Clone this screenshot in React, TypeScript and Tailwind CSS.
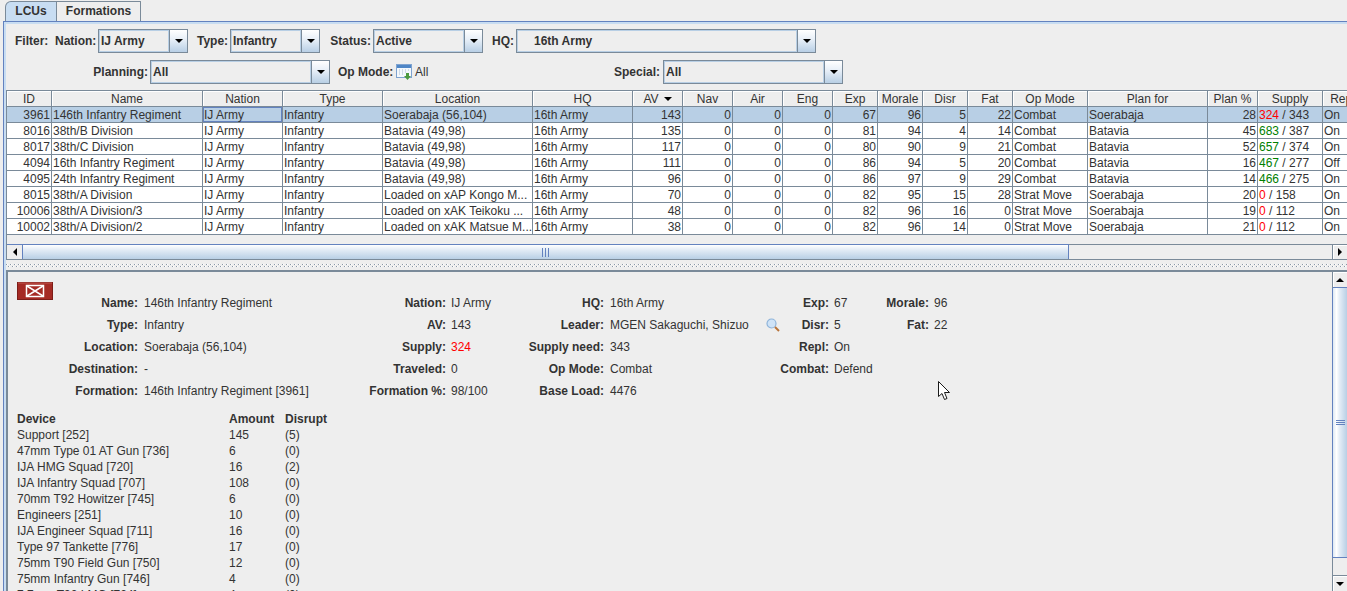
import React from "react";

const cols = [45, 151, 80, 100, 150, 100, 50, 50, 50, 50, 45, 45, 45, 45, 75, 120, 50, 65, 40];
const heads = ["ID", "Name", "Nation", "Type", "Location", "HQ", "AV", "Nav", "Air", "Eng", "Exp", "Morale", "Disr", "Fat", "Op Mode", "Plan for", "Plan %", "Supply", "Repl"];

type Row = { id: string; name: string; loc: string; av: string; exp: string; mor: string; dis: string; fat: string; mode: string; plan: string; pct: string; sup: string; supc: string; need: string; rep: string };
const rows: Row[] = [
  { id: "3961", name: "146th Infantry Regiment", loc: "Soerabaja (56,104)", av: "143", exp: "67", mor: "96", dis: "5", fat: "22", mode: "Combat", plan: "Soerabaja", pct: "28", sup: "324", supc: "text-[#ff0000]", need: "343", rep: "On" },
  { id: "8016", name: "38th/B Division", loc: "Batavia (49,98)", av: "135", exp: "81", mor: "94", dis: "4", fat: "14", mode: "Combat", plan: "Batavia", pct: "45", sup: "683", supc: "text-[#008000]", need: "387", rep: "On" },
  { id: "8017", name: "38th/C Division", loc: "Batavia (49,98)", av: "117", exp: "80", mor: "90", dis: "9", fat: "21", mode: "Combat", plan: "Batavia", pct: "52", sup: "657", supc: "text-[#008000]", need: "374", rep: "On" },
  { id: "4094", name: "16th Infantry Regiment", loc: "Batavia (49,98)", av: "111", exp: "86", mor: "94", dis: "5", fat: "20", mode: "Combat", plan: "Batavia", pct: "16", sup: "467", supc: "text-[#008000]", need: "277", rep: "Off" },
  { id: "4095", name: "24th Infantry Regiment", loc: "Batavia (49,98)", av: "96", exp: "86", mor: "97", dis: "9", fat: "29", mode: "Combat", plan: "Batavia", pct: "14", sup: "466", supc: "text-[#008000]", need: "275", rep: "On" },
  { id: "8015", name: "38th/A Division", loc: "Loaded on xAP Kongo M...", av: "70", exp: "82", mor: "95", dis: "15", fat: "28", mode: "Strat Move", plan: "Soerabaja", pct: "20", sup: "0", supc: "text-[#ff0000]", need: "158", rep: "On" },
  { id: "10006", name: "38th/A Division/3", loc: "Loaded on xAK Teikoku ...", av: "48", exp: "82", mor: "96", dis: "16", fat: "0", mode: "Strat Move", plan: "Soerabaja", pct: "19", sup: "0", supc: "text-[#ff0000]", need: "112", rep: "On" },
  { id: "10002", name: "38th/A Division/2", loc: "Loaded on xAK Matsue M...", av: "38", exp: "82", mor: "96", dis: "14", fat: "0", mode: "Strat Move", plan: "Soerabaja", pct: "21", sup: "0", supc: "text-[#ff0000]", need: "112", rep: "On" },
];

const devices = [
  ["Support [252]", "145", "(5)"],
  ["47mm Type 01 AT Gun [736]", "6", "(0)"],
  ["IJA HMG Squad [720]", "16", "(2)"],
  ["IJA Infantry Squad [707]", "108", "(0)"],
  ["70mm T92 Howitzer [745]", "6", "(0)"],
  ["Engineers [251]", "10", "(0)"],
  ["IJA Engineer Squad [711]", "16", "(0)"],
  ["Type 97 Tankette [776]", "17", "(0)"],
  ["75mm T90 Field Gun [750]", "12", "(0)"],
  ["75mm Infantry Gun [746]", "4", "(0)"],
  ["7.7mm T92 LMG [724]", "4", "(0)"],
];

function Arrow() {
  return <div className="w-0 h-0 border-l-[4px] border-r-[4px] border-t-[4px] border-l-transparent border-r-transparent border-t-black" />;
}

function Combo({ text, width, indent }: { text: string; width: string; indent?: boolean }) {
  return (
    <div className={`flex h-[24px] border border-[#7a8a99] ${width}`}>
      <div className={`flex-1 min-w-0 flex items-center font-bold border border-[#b8cfe5] ${indent ? "pl-[16px]" : "pl-[1px]"}`}>{text}</div>
      <div className="w-[18px] border-l border-[#7a8a99] flex items-center justify-center bg-[linear-gradient(to_bottom,#ffffff,#e6eef7_45%,#b8cfe5)]">
        <Arrow />
      </div>
    </div>
  );
}

function Cell({ children, right, cls }: { children: React.ReactNode; right?: boolean; cls?: string }) {
  return (
    <td className={`h-[16px] p-0 pt-[1px] border-r border-b border-[#7a8a99] overflow-hidden whitespace-nowrap leading-[14px] ${right ? "text-right pr-[1px]" : "pl-[1px]"} ${cls ?? ""}`}>
      {children}
    </td>
  );
}

function Label({ children }: { children?: React.ReactNode }) {
  return <div className="font-bold text-right whitespace-nowrap">{children}</div>;
}

function DLabel({ children }: { children?: React.ReactNode }) {
  return <div className="font-bold text-right whitespace-nowrap -mr-[1px]">{children}</div>;
}

function Info({ children, pad }: { children?: React.ReactNode; pad: string }) {
  return <div className={`whitespace-nowrap flex items-center ${pad}`}>{children}</div>;
}

export default function App() {
  return (
    <div className="relative w-[1347px] h-[591px] overflow-hidden bg-[#eeeeee] text-[12px] text-[#333333] font-['Liberation_Sans',Arial,sans-serif] flex flex-col">
      {/* tabs */}
      <div className="flex h-[21px] pl-[5px] pt-[1px] shrink-0">
        <div className="w-[52px] border border-b-0 border-[#7a8a99] rounded-tl-[6px] bg-[#c8ddf2] font-bold flex items-center justify-center pb-[1px] text-center">LCUs</div>
        <div className="w-[84px] border border-l-0 border-b-0 border-[#7a8a99] rounded-tr-[1px] bg-[#eeeeee] font-bold flex items-center justify-center pb-[1px]">Formations</div>
      </div>

      {/* tab pane */}
      <div className="flex-1 min-h-0 ml-[3px] border-l border-t border-[#6382bf] flex flex-col">
        <div className="flex-1 min-h-0 border-l-2 border-t-2 border-[#c8ddf2] flex flex-col">
          {/* filter */}
          <div className="flex items-center h-[24px] mt-[5px] shrink-0">
            <div className="font-bold ml-[9px] w-[33px] whitespace-nowrap">Filter:</div>
            <div className="ml-[7px] w-[41px]"><Label>Nation:</Label></div>
            <div className="ml-[2px]"><Combo text="IJ Army" width="w-[90px]" /></div>
            <div className="ml-[9px] w-[31px]"><Label>Type:</Label></div>
            <div className="ml-[2px]"><Combo text="Infantry" width="w-[90px]" /></div>
            <div className="ml-[10px] w-[41px]"><Label>Status:</Label></div>
            <div className="ml-[2px]"><Combo text="Active" width="w-[110px]" /></div>
            <div className="ml-[9px] w-[22px]"><Label>HQ:</Label></div>
            <div className="ml-[2px]"><Combo text="16th Army" width="w-[300px]" indent /></div>
          </div>
          <div className="flex items-center h-[24px] mt-[7px] shrink-0">
            <div className="ml-[87px] w-[55px]"><Label>Planning:</Label></div>
            <div className="ml-[2px]"><Combo text="All" width="w-[180px]" /></div>
            <div className="ml-[8px] w-[54px]"><Label>Op Mode:</Label></div>
            <svg className="ml-[4px] shrink-0" width="16" height="16" viewBox="0 0 16 16">
              <rect x="0.5" y="0.5" width="15" height="13" fill="#f4f8fc" stroke="#7fa3d0" />
              <rect x="1" y="1" width="14" height="3" fill="#4f86c6" />
              <path d="M3 6h1M6 6h1M9 6h1M12 6h1M3 8h1M6 8h1M9 8h1M3 10h1M6 10h1" stroke="#a9bdd4" />
              <path d="M10 9h3v3h2l-3.500 4-3.500-4h2z" fill="#4c9a3f" />
            </svg>
            <div className="ml-[3px] w-[201px]">All</div>
            <div className="w-[44px] flex justify-end"><Label>Special:</Label></div>
            <div className="ml-[3px]"><Combo text="All" width="w-[180px]" /></div>
          </div>

          {/* table scroll pane */}
          <div className="mt-[6px] h-[170px] shrink-0 border-l border-t border-[#7a8a99] flex flex-col overflow-hidden">
            <div className="h-[144px] shrink-0 overflow-hidden">
              <table className="table-fixed border-separate border-spacing-0 w-[1356px]">
                <colgroup>
                  {cols.map((w, i) => <col key={i} style={{ width: w }} />)}
                </colgroup>
                <thead>
                  <tr>
                    {heads.map((h) => (
                      <th key={h} className="h-[16px] p-0 pt-[1px] font-normal text-center leading-[14px] bg-[#eeeeee] border-r border-b border-[#7a8a99] shadow-[inset_1px_1px_0_#ffffff] whitespace-nowrap overflow-hidden">
                        {h === "AV" ? (
                          <div className="flex items-center justify-center gap-[5px] h-[14px]">AV<Arrow /></div>
                        ) : h}
                      </th>
                    ))}
                  </tr>
                </thead>
                <tbody>
                  {rows.map((r, i) => (
                    <tr key={r.id} className={i === 0 ? "bg-[#b8cfe5]" : "bg-white"}>
                      <Cell right>{r.id}</Cell>
                      <Cell>{r.name}</Cell>
                      <Cell cls={i === 0 ? "shadow-[inset_0_0_0_1px_#6382bf]" : ""}>IJ Army</Cell>
                      <Cell>Infantry</Cell>
                      <Cell>{r.loc}</Cell>
                      <Cell>16th Army</Cell>
                      <Cell right>{r.av}</Cell>
                      <Cell right>0</Cell>
                      <Cell right>0</Cell>
                      <Cell right>0</Cell>
                      <Cell right>{r.exp}</Cell>
                      <Cell right>{r.mor}</Cell>
                      <Cell right>{r.dis}</Cell>
                      <Cell right>{r.fat}</Cell>
                      <Cell>{r.mode}</Cell>
                      <Cell>{r.plan}</Cell>
                      <Cell right>{r.pct}</Cell>
                      <Cell><span className={r.supc}>{r.sup}</span> / {r.need}</Cell>
                      <Cell>{r.rep}</Cell>
                    </tr>
                  ))}
                </tbody>
              </table>
            </div>
            <div className="h-[9px] shrink-0" />
            {/* horizontal scrollbar */}
            <div className="h-[16px] shrink-0 flex border-b border-[#7a8a99]">
              <div className="w-[16px] border-t border-r border-[#6382bf] flex items-center justify-center">
                <div className="w-0 h-0 border-y-[4px] border-r-[4px] border-y-transparent border-r-black" />
              </div>
              <div className="w-[1046px] border-t border-r border-[#6382bf] flex items-center justify-center bg-[linear-gradient(to_bottom,#ffffff,#e6eef7_30%,#b8cfe5)]">
                <div className="flex gap-[2px] h-[9px]">
                  <div className="w-[1px] bg-[#6382bf]" /><div className="w-[1px] bg-[#6382bf]" /><div className="w-[1px] bg-[#6382bf]" />
                </div>
              </div>
              <div className="w-[263px] border-t border-[#7a8a99]" />
              <div className="w-[15px] border-t border-l border-[#7a8a99] shadow-[inset_1px_1px_0_#ffffff] flex items-center justify-center">
                <div className="w-0 h-0 border-y-[4px] border-l-[4px] border-y-transparent border-l-black" />
              </div>
            </div>
          </div>

          {/* split divider */}
          <div className="h-[10px] shrink-0 flex flex-col justify-center gap-[1px]">
            <div className="h-[1px] bg-[repeating-linear-gradient(to_right,#8a98a8_0,#8a98a8_1px,#ffffff_1px,#ffffff_2px,#eeeeee_2px,#eeeeee_4px)]" />
            <div className="h-[1px] ml-[2px] bg-[repeating-linear-gradient(to_right,#8a98a8_0,#8a98a8_1px,#ffffff_1px,#ffffff_2px,#eeeeee_2px,#eeeeee_4px)]" />
          </div>

          {/* lower panel */}
          <div className="flex-1 min-h-0 flex border-t-2 border-l-2 border-[#7a8a99] overflow-hidden">
            <div className="flex-1 min-w-0 pl-[9px] pt-[10px] overflow-hidden">
              <svg width="36" height="18" viewBox="0 0 36 18" className="block -mb-[8px]">
                <rect x="0" y="0" width="36" height="18" fill="#a52b25" />
                <rect x="0.5" y="0.5" width="35" height="17" fill="none" stroke="#7d1d18" />
                <path d="M1 1h34" stroke="#c45a52" />
                <rect x="9.500" y="3.500" width="17" height="11" fill="none" stroke="#ffffff" strokeWidth="1.500" />
                <path d="M10 4l16 10M26 4l-16 10" stroke="#ffffff" strokeWidth="1.500" />
              </svg>
              <div className="grid grid-cols-[120px_163px_145px_35px_123px_157px_68px_52px_48px_100px] auto-rows-[22px] items-center">
                <DLabel>Name:</DLabel><Info pad="pl-[7px]">146th Infantry Regiment</Info>
                <DLabel>Nation:</DLabel><Info pad="pl-[6px]">IJ Army</Info>
                <DLabel>HQ:</DLabel><Info pad="pl-[7px]">16th Army</Info>
                <DLabel>Exp:</DLabel><Info pad="pl-[6px]">67</Info>
                <DLabel>Morale:</DLabel><Info pad="pl-[6px]">96</Info>

                <DLabel>Type:</DLabel><Info pad="pl-[7px]">Infantry</Info>
                <DLabel>AV:</DLabel><Info pad="pl-[6px]">143</Info>
                <DLabel>Leader:</DLabel>
                <Info pad="pl-[7px]">
                  MGEN Sakaguchi, Shizuo
                  <svg className="ml-[17px] shrink-0" width="14" height="14" viewBox="0 0 14 14">
                    <circle cx="5.500" cy="5.500" r="4.500" fill="#cfe3f7" stroke="#8fb4da" strokeWidth="1.200" />
                    <path d="M9 9l4 4" stroke="#b8733a" strokeWidth="2" />
                  </svg>
                </Info>
                <DLabel>Disr:</DLabel><Info pad="pl-[6px]">5</Info>
                <DLabel>Fat:</DLabel><Info pad="pl-[6px]">22</Info>

                <DLabel>Location:</DLabel><Info pad="pl-[7px]">Soerabaja (56,104)</Info>
                <DLabel>Supply:</DLabel><Info pad="pl-[6px]"><span className="text-[#ff0000]">324</span></Info>
                <DLabel>Supply need:</DLabel><Info pad="pl-[7px]">343</Info>
                <DLabel>Repl:</DLabel><Info pad="pl-[6px]">On</Info>
                <DLabel /><Info pad="" />

                <DLabel>Destination:</DLabel><Info pad="pl-[7px]">-</Info>
                <DLabel>Traveled:</DLabel><Info pad="pl-[6px]">0</Info>
                <DLabel>Op Mode:</DLabel><Info pad="pl-[7px]">Combat</Info>
                <DLabel>Combat:</DLabel><Info pad="pl-[6px]">Defend</Info>
                <DLabel /><Info pad="" />

                <DLabel>Formation:</DLabel><Info pad="pl-[7px]">146th Infantry Regiment [3961]</Info>
                <DLabel>Formation %:</DLabel><Info pad="pl-[6px]">98/100</Info>
                <DLabel>Base Load:</DLabel><Info pad="pl-[7px]">4476</Info>
                <DLabel /><Info pad="" />
                <DLabel /><Info pad="" />
              </div>
              <div className="mt-[9px] grid grid-cols-[212px_56px_100px] auto-rows-[16px] items-center">
                <div className="font-bold">Device</div>
                <div className="font-bold">Amount</div>
                <div className="font-bold">Disrupt</div>
                {devices.map((d) => (
                  <React.Fragment key={d[0]}>
                    <div className="whitespace-nowrap">{d[0]}</div>
                    <div>{d[1]}</div>
                    <div>{d[2]}</div>
                  </React.Fragment>
                ))}
              </div>
            </div>
            {/* vertical scrollbar */}
            <div className="w-[15px] shrink-0 flex flex-col border-l border-[#7a8a99]">
              <div className="h-[16px] shrink-0 border-b border-[#6382bf] shadow-[inset_1px_1px_0_#ffffff] flex items-center justify-center">
                <div className="w-0 h-0 border-x-[4px] border-b-[4px] border-x-transparent border-b-black" />
              </div>
              <div className="h-[270px] shrink-0 -ml-[1px] border-l border-b border-[#6382bf] flex items-center justify-center bg-[linear-gradient(to_right,#dde8f3,#ffffff_25%,#e6eef7_45%,#b8cfe5)]">
                <div className="flex flex-col gap-[1px] w-[9px]">
                  <div className="h-[1px] bg-[#6382bf]" /><div className="h-[1px] bg-[#6382bf]" /><div className="h-[1px] bg-[#6382bf]" />
                </div>
              </div>
              <div className="h-[18px] shrink-0 border-b border-[#7a8a99]" />
              <div className="flex-1 flex items-center justify-center shadow-[inset_1px_1px_0_#ffffff]">
                <Arrow />
              </div>
            </div>
          </div>
        </div>
      </div>

      {/* mouse pointer over the page */}
      <svg className="absolute left-[938px] top-[381px]" width="13" height="20" viewBox="0 0 13 20">
        <path d="M0.5 0.5v15l3.5-3 2.5 6 2.5-1-2.5-6h5z" fill="#ffffff" stroke="#1a1a1a" />
      </svg>
    </div>
  );
}
